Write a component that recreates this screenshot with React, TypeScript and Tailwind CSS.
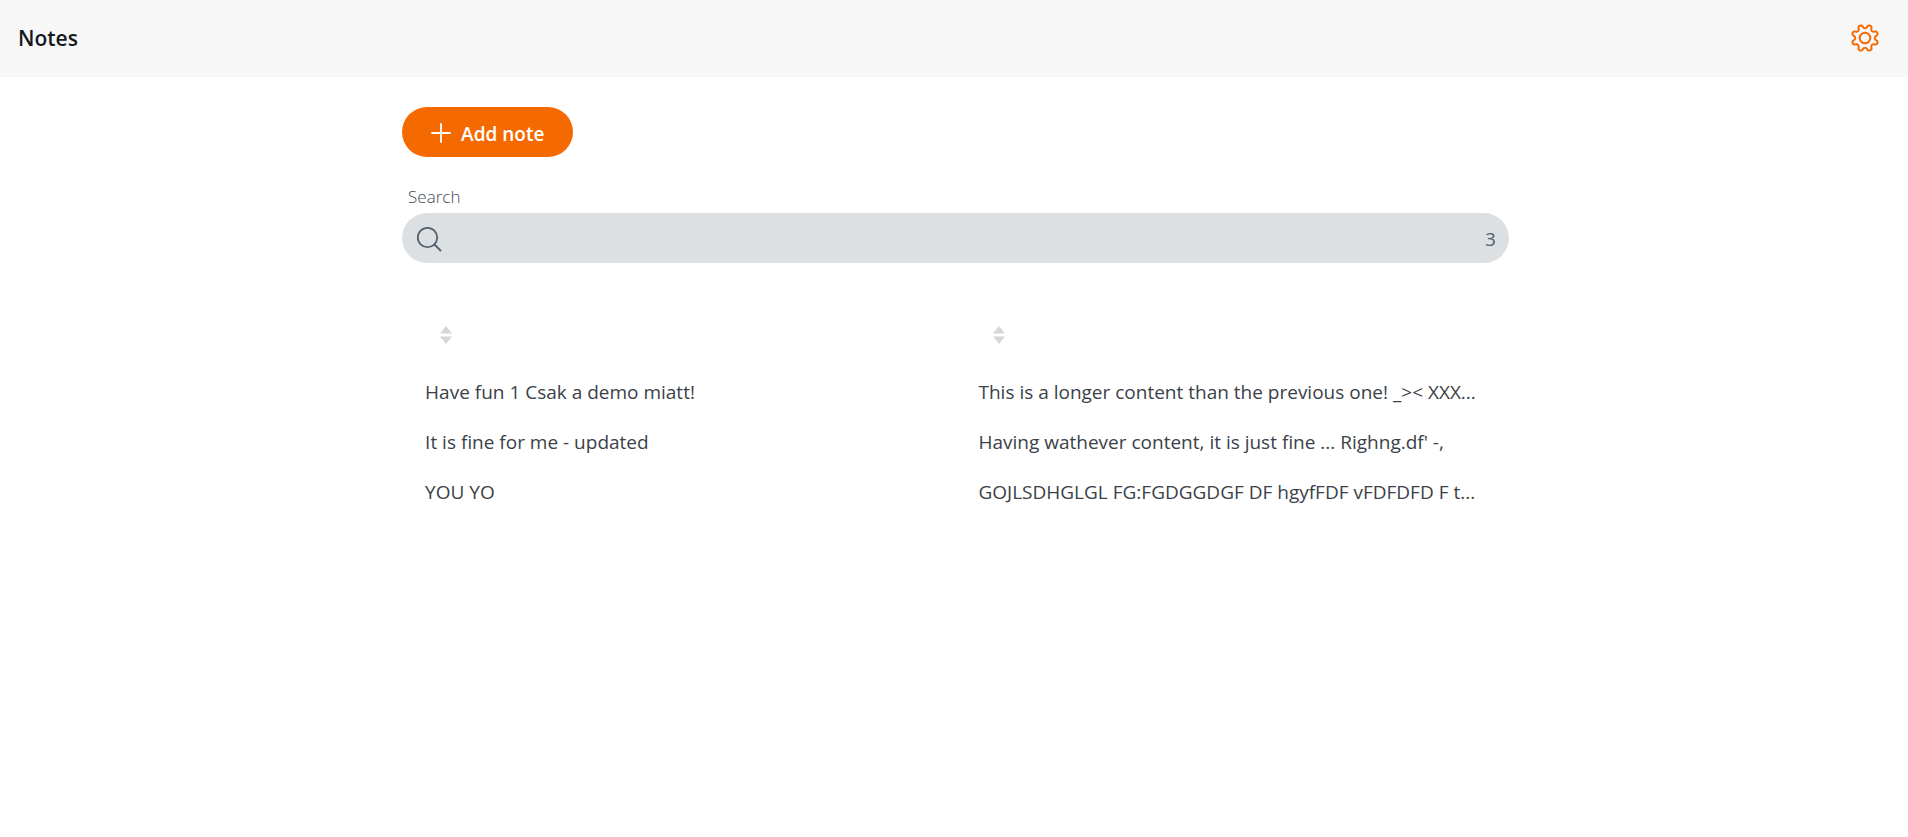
const notes = [
  {
    title: "Have fun 1 Csak a demo miatt!",
    content: "This is a longer content than the previous one! _>< XXX...",
  },
  {
    title: "It is fine for me - updated",
    content: "Having wathever content, it is just fine ... Righng.df' -,",
  },
  {
    title: "YOU YO",
    content: "GOJLSDHGLGL FG:FGDGGDGF DF hgyfFDF vFDFDFD F t...",
  },
];

// Outline of an eight-toothed gear, sampled around the circle.
const gearOutline =
  Array.from({ length: 160 }, (_, i) => {
    const a = (i / 160) * Math.PI * 2;
    const r = 11.6 - 1.9 * Math.tanh(1.6 * Math.cos(8 * a));
    const x = (15 + r * Math.sin(a)).toFixed(2);
    const y = (15 - r * Math.cos(a)).toFixed(2);
    return `${i === 0 ? "M" : "L"}${x} ${y}`;
  }).join("") + "Z";

function GearIcon() {
  return (
    <svg width="30" height="30" viewBox="0 0 30 30" fill="none" stroke="currentColor" strokeWidth="2" strokeLinejoin="round" aria-hidden="true">
      <path d={gearOutline} />
      <circle cx="15" cy="15" r="5.3" />
    </svg>
  );
}

function PlusIcon() {
  return (
    <svg width="20" height="20" viewBox="0 0 20 20" fill="none" stroke="currentColor" strokeWidth="1.8" strokeLinecap="round" aria-hidden="true">
      <path d="M10 1V19M1 10H19" />
    </svg>
  );
}

function SearchIcon() {
  return (
    <svg width="26" height="26" viewBox="0 0 26 26" fill="none" stroke="currentColor" strokeWidth="1.8" strokeLinecap="round" aria-hidden="true">
      <circle cx="11.5" cy="11.5" r="9.7" />
      <path d="M18.5 18.5L24.5 24.5" />
    </svg>
  );
}

function SortButton({ label }: { label: string }) {
  return (
    <button type="button" aria-label={label} className="ml-[15px] block text-[#d5d8da]">
      <svg width="12" height="18" viewBox="0 0 12 18" fill="currentColor" aria-hidden="true">
        <path d="M6 0L12 7.5H0ZM0 10.5H12L6 18Z" />
      </svg>
    </button>
  );
}

export default function App() {
  return (
    <div className="min-h-screen bg-white font-['Open_Sans','Noto_Sans',sans-serif] text-[#3b4148]">
      <header className="flex h-[77px] items-center justify-between bg-[#f7f7f7] pr-7 pb-0.5 pl-[18px]">
        <h1 className="text-[21px] leading-8 font-semibold text-[#15191d]">Notes</h1>
        <button type="button" aria-label="Settings" className="text-[#f56a00]">
          <GearIcon />
        </button>
      </header>
      <main className="pt-[30px] pl-[3px]">
        <div className="mx-auto w-[58.1%]">
          <button type="button" className="flex h-[50px] items-center gap-2.5 rounded-full bg-[#f56a00] px-[29px] pt-0.5 text-[19px] font-semibold text-white">
            <PlusIcon />
            <span className="pt-0.5">Add note</span>
          </button>
          <label htmlFor="search" className="mt-6 block pl-1.5 text-[17px] leading-8 font-light text-[#3f4a56]">
            Search
          </label>
          <div className="flex h-[50px] items-center rounded-full bg-[#dce0e3] pt-0.5 pr-[13px] pl-3.5 text-[#55606c]">
            <SearchIcon />
            <input id="search" type="text" className="min-w-0 flex-1 bg-transparent px-3 text-[19px] outline-none" />
            <span className="text-[19px]">3</span>
          </div>
          <table className="mt-10 w-full table-fixed text-left text-[19px]">
            <thead>
              <tr className="h-16">
                <th className="px-[23px]"><SortButton label="Sort by title" /></th>
                <th className="px-[23px]"><SortButton label="Sort by content" /></th>
              </tr>
            </thead>
            <tbody>
              {notes.map((note) => (
                <tr key={note.title} className="h-[50px]">
                  <td className="truncate px-[23px]">{note.title}</td>
                  <td className="truncate px-[23px]">{note.content}</td>
                </tr>
              ))}
            </tbody>
          </table>
        </div>
      </main>
    </div>
  );
}
